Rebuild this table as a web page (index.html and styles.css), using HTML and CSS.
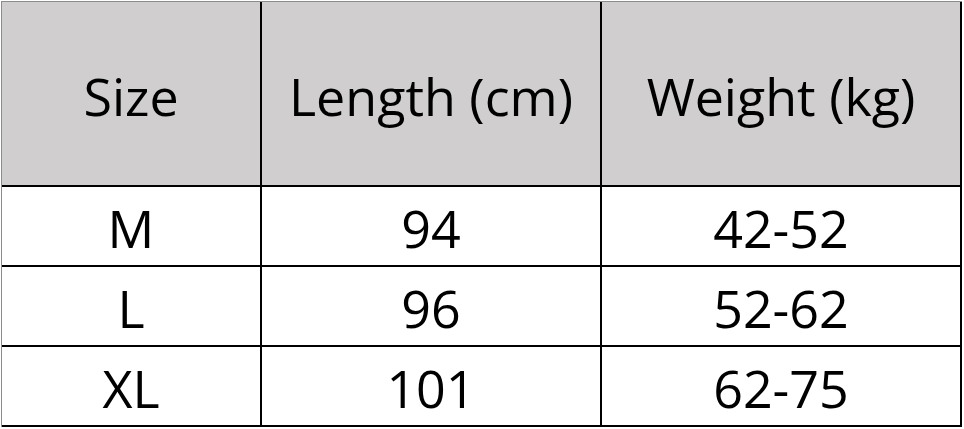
FILE: index.html
```html
<!DOCTYPE html>
<html>
<head>
<meta charset="utf-8">
<link rel="stylesheet" href="styles.css">
</head>
<body>
<div class="sheet">
  <div class="cell head">Size</div>
  <div class="cell head">Length (cm)</div>
  <div class="cell head">Weight (kg)</div>
  <div class="cell">M</div>
  <div class="cell">94</div>
  <div class="cell">42-52</div>
  <div class="cell">L</div>
  <div class="cell">96</div>
  <div class="cell">52-62</div>
  <div class="cell">XL</div>
  <div class="cell">101</div>
  <div class="cell">62-75</div>
</div>
</body>
</html>
```
FILE: styles.css
```css
html, body {
  margin: 0;
  padding: 0;
  background: #ffffff;
}
.sheet {
  display: grid;
  grid-template-columns: 260px 340px 360px;
  grid-template-rows: 185px 80px 80px 80px;
  width: fit-content;
  margin: 1px 0 0 1px;
  border-left: 1px solid #8c8c8c;
  border-top: 1px solid #8c8c8c;
  font-family: "Open Sans", "Liberation Sans", sans-serif;
  font-size: 52px;
  color: #000;
}
.cell {
  box-sizing: border-box;
  border-right: 2px solid #000;
  border-bottom: 2px solid #000;
  display: flex;
  align-items: center;
  justify-content: center;
  padding-top: 3px;
}
.head {
  background: #d0cece;
  padding-top: 4px;
}
```
